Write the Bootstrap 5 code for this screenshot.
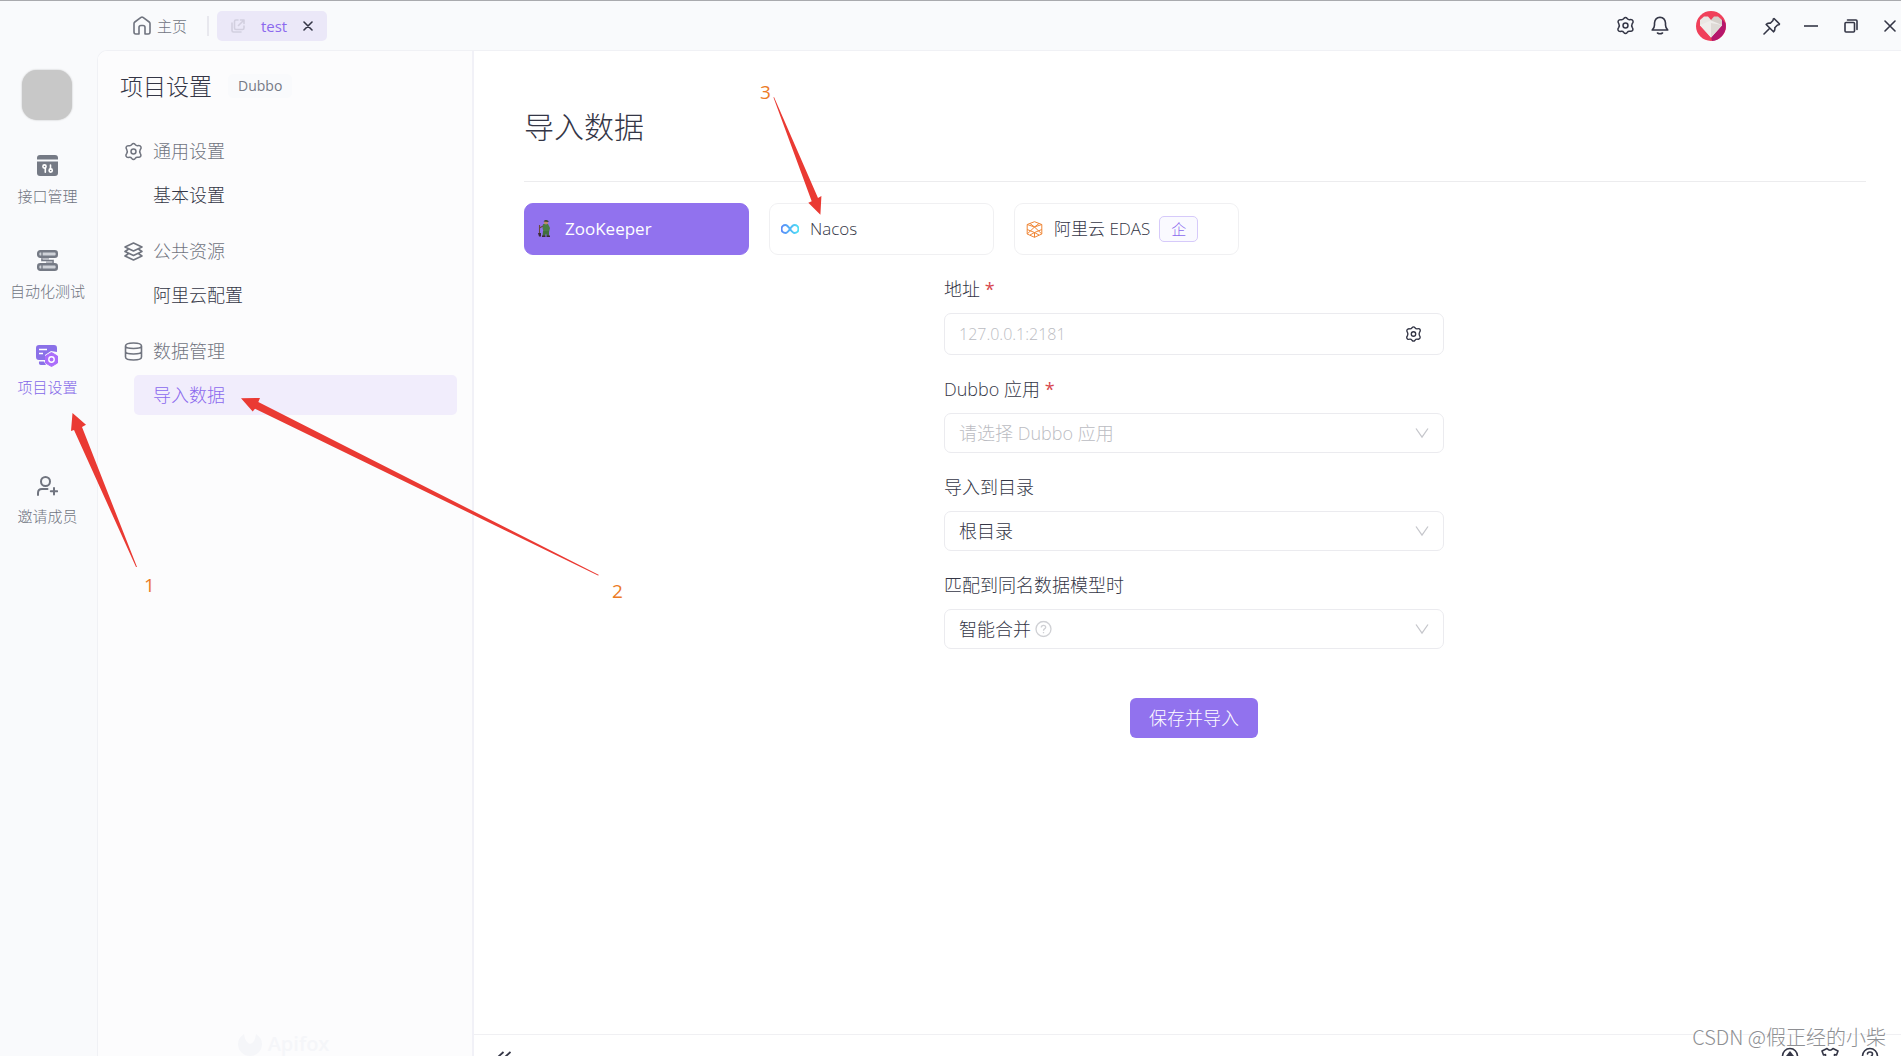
<!DOCTYPE html>
<html lang="zh-CN">
<head>
<meta charset="utf-8">
<meta name="viewport" content="width=device-width, initial-scale=1">
<title>导入数据 - 项目设置</title>
<link rel="stylesheet" href="https://cdn.jsdelivr.net/npm/bootstrap@5.3.0/dist/css/bootstrap.min.css">
<style>
:root{--ink:#343646;--muted-ink:#70747f;--brand:#8b69ee;--line:#ededf1;--soft:#f9fafc}
body{font-family:"Open Sans","Noto Sans CJK SC",sans-serif;font-weight:300;font-size:18px;line-height:26px;color:var(--ink);background:var(--soft);overflow:hidden}
svg{display:block;flex:none}
.ln{fill:none;stroke:currentColor;stroke-width:1.6;stroke-linecap:round;stroke-linejoin:round}
.topbar{height:50px;border-top:1px solid #a9aaae;padding-left:133px;font-size:15px;color:var(--muted-ink)}
.topbar a{color:inherit;gap:6px}
.home-sep{width:2px;height:20px;background:#e8e8ee;margin:0 8px 0 20px}
.tab-chip{height:30px;width:110px;padding:0 14px;background:#ebe8f8;border-radius:5px}
.tab-chip span{color:var(--brand);font-weight:400}
.icon-btn{background:none;border:0;padding:0;color:var(--ink)}
.avatar-btn{margin:1px 37px 0 27px}
.pin-btn{margin-right:23px}
.win-btn{margin-right:26px}
.close-btn{margin-right:5px}
.rail{width:97px;padding-top:20px;font-size:15px;line-height:22px;color:var(--muted-ink)}
.avatar-box{width:50px;height:50px;border-radius:15px;background:#c8c8c8;box-shadow:0 0 2px #bbb;margin:0 3px 35px 0}
.rail a{color:inherit;height:95px;padding-right:2px;gap:9px}
.rail a.current{color:#8468e8}
.rail a.invite{margin-top:36px}
.frame-box{border-top:1px solid #f0f1f5;border-left:1px solid #f0f1f5;border-top-left-radius:10px;overflow:hidden;background:#fff;min-width:0;min-height:0}
.side{width:376px;border-right:2px solid #f1f1f7;background:#fcfcfd;padding:15px 15px 0 22px}
.side h1{font-size:23px;line-height:40px;font-weight:300;margin-bottom:9px}
.type-tag{font-size:14px;font-weight:400;line-height:24px;padding:0 10px;background:var(--soft);border-radius:5px;color:#757985;margin-bottom:9px}
.grp-head{height:40px;margin-top:16px;padding-left:4px;gap:10px;color:var(--muted-ink);font-size:18px}
.side-link{height:40px;margin:4px 0 0 14px;padding-left:19px;border-radius:5px;font-size:18px;color:var(--ink)}
.side-link.current{background:#f1edfc;color:var(--brand)}
.brand-ghost{color:#f5f6f9;font-size:20px;font-weight:600;line-height:24px;gap:6px;padding-right:10px}
.main-col{min-width:0}
.body-area{padding:50px 35px 0 50px}
.body-area h2{font-size:30px;line-height:52px;font-weight:300;padding-bottom:28px;border-bottom:1px solid #ececee;margin-bottom:21px}
.src-row{gap:20px}
.src{width:225px;height:52px;border:1px solid #f0f0f2;border-radius:9px;background:#fff;color:var(--ink);padding:0 11px;gap:11px;text-align:left;font-size:17px;font-weight:300}
.src.current{background:#9172ee;border-color:#9172ee;color:#fff;font-weight:400}
.ent{font-size:15px;line-height:22px;border:1px solid #d6cafa;background:#fafaff;color:var(--brand);border-radius:5px;padding:1px 11px;margin-left:-2px}
.import-form{width:500px;max-width:100%;margin:21px auto 0}
.import-wrap{padding-right:2px}
.fld{margin-bottom:21px}
.fld label{display:block;margin-bottom:11px}
.fld b{color:#d8474e;font-weight:400}
.fld .form-control,.fld .form-select{height:40px;border:1px solid #ebebef;border-radius:7px;font-size:18px;font-weight:300;color:var(--ink);padding:0 14px;background:#fff}
.fld .form-control{height:42px;font-size:16px}
.fld .form-control::placeholder,.fld .form-select.blank{color:#bbbcc2}
.over-end{position:absolute;right:15px;top:50%;transform:translateY(-50%);color:#c6c7cc;pointer-events:none}
.over-help{position:absolute;left:91px;top:50%;transform:translateY(-50%);color:#cfd0d4}
.gear-end{right:22px;color:var(--ink);pointer-events:auto}
.save{background:#9172ee;color:#fff;border:0;border-radius:6px;height:40px;width:128px;padding:0;font-size:18px;font-weight:300;margin-top:28px}
.foot{height:22px;border-top:1px solid #f0f0f3;color:var(--ink);padding:12px 22px 0 23px;overflow:hidden}
.foot-icons{gap:22px}
.notes{position:absolute;left:0;top:0;pointer-events:none;z-index:5}
.notes text{font-size:19px;font-weight:400;fill:#ec7a25}
.watermark{position:absolute;right:15px;bottom:4px;z-index:6;font-size:20px;line-height:30px;font-family:"Noto Sans CJK SC",sans-serif;color:#8e8f93;text-shadow:1px 1px 0 #fff}
</style>
</head>
<body class="vh-100 d-flex flex-column position-relative">
<svg width="0" height="0" class="position-absolute" aria-hidden="true">
<symbol id="gear" viewBox="0 0 20 20"><path class="ln" d="M8.2 2.7 Q10 .5 11.8 2.7 Q12.7 4 14.3 3.9 Q17.8 3.200 18 6 Q18 7 17.100 8 Q16 10 17.100 12 Q18.800 14.600 16.500 15.900 Q15.300 16.300 14.300 16.100 Q12.700 16 11.800 17.300 Q10 19.500 8.200 17.300 Q7.300 16 5.700 16.100 Q2.200 16.800 2 14 Q2 13 2.900 12 Q4 10 2.900 8 Q1.200 5.400 3.500 4.100 Q4.700 3.700 5.700 3.900 Q7.300 4 8.200 2.700Z"/><circle class="ln" cx="10" cy="10" r="2.6"/></symbol>
<symbol id="chev" viewBox="0 0 14 12"><path d="M1 1.500 7 10 13 1.500" fill="none" stroke="currentColor" stroke-width="1.300"/></symbol>
</svg>

<header class="topbar d-flex align-items-center flex-shrink-0">
  <a href="#" class="d-flex align-items-center text-decoration-none">
    <svg width="18" height="19" viewBox="0 0 18 19"><path class="ln" d="M1 7.500 Q1 6.600 1.800 6L8 1.400Q9 .8 10 1.400L16.200 6Q17 6.600 17 7.500V16Q17 18 15.200 18H12V11.500Q12 9.500 10 9.500H8Q6 9.500 6 11.500V18H2.800Q1 18 1 16Z"/></svg>
    <span>主页</span>
  </a>
  <div class="home-sep"></div>
  <div class="tab-chip d-flex align-items-center justify-content-between">
    <svg width="14" height="14" viewBox="0 0 14 14" color="#d2cfdf"><path class="ln" d="M7 1H5Q3.500 1 3.500 2.500V9Q3.500 10.500 5 10.500H11.500Q13 10.500 13 9V7M9.500 1H13V4.500M13 1 7.500 6.500M1 4V11.500Q1 13 2.500 13H10"/></svg>
    <span>test</span>
    <button class="icon-btn" aria-label="关闭标签"><svg width="10" height="10" viewBox="0 0 10 10"><path class="ln" d="M1 1 9 9M9 1 1 9"/></svg></button>
  </div>
  <div class="ms-auto d-flex align-items-center">
    <button class="icon-btn" aria-label="设置"><svg width="19" height="19"><use href="#gear"/></svg></button>
    <button class="icon-btn ms-3" aria-label="通知"><svg width="18" height="19" viewBox="0 0 18 19"><path class="ln" d="M1.200 14H16.800Q14.500 12 14.500 9V7Q14 1.500 9 1.200Q4 1.500 3.500 7V9Q3.500 12 1.200 14ZM6.500 17Q9 18.500 11.500 17"/></svg></button>
    <button class="icon-btn avatar-btn" aria-label="账户"><svg width="30" height="30" viewBox="0 0 30 30"><circle cx="15" cy="15" r="15" fill="#f0405a"/><path d="M26 8 29.500 12A15 15 0 0 1 16 30L15 26Z" fill="#b5176c"/><path d="M15 26.500 4 14.500V9L8 5.500H12L15 9Z" fill="#e9e6e3"/><path d="M15 26.500 26 14.500V9L22 5.500H18L15 9Z" fill="#d5d0cb"/><path d="M4 14 15 9.500 26 14 15 26.500Z" fill="#efedeb"/><path d="M15 12V26.500L26 14Z" fill="#dedad6"/></svg></button>
    <button class="icon-btn pin-btn" aria-label="置顶"><svg width="18" height="18" viewBox="0 0 18 18"><path class="ln" d="M11 1.500 16.500 7Q16.500 8 14.500 8L11.800 10.700Q12.300 13.500 10.500 14.800L3.200 7.500Q4.500 5.700 7.300 6.200L10 3.500Q10 1.500 11 1.500ZM6.500 11.500 1 17"/></svg></button>
    <button class="icon-btn win-btn" aria-label="最小化"><svg width="14" height="14" viewBox="0 0 14 14"><path d="M0 7H14" stroke="currentColor" stroke-width="1.600"/></svg></button>
    <button class="icon-btn win-btn" aria-label="还原"><svg width="14" height="14" viewBox="0 0 14 14"><path class="ln" d="M1 4.500Q1 3.500 2 3.500H9.500Q10.500 3.500 10.500 4.500V12Q10.500 13 9.500 13H2Q1 13 1 12ZM3.500 1H12Q13 1 13 2V10.500"/></svg></button>
    <button class="icon-btn close-btn" aria-label="关闭"><svg width="12" height="12" viewBox="0 0 12 12"><path class="ln" d="M1 1 11 11M11 1 1 11"/></svg></button>
  </div>
</header>

<div class="d-flex flex-grow-1 overflow-hidden">
  <nav class="rail d-flex flex-column align-items-center flex-shrink-0" aria-label="主导航">
    <div class="avatar-box flex-shrink-0"></div>
    <a href="#" class="d-flex flex-column align-items-center text-decoration-none flex-shrink-0">
      <svg width="21" height="21" viewBox="0 0 21 21"><path d="M0 4.500V3Q0 0 3 0H18Q21 0 21 3V4.500Z" fill="#757a85"/><path d="M0 6.500H21V18Q21 21 18 21H3Q0 21 0 18Z" fill="#757a85"/><g fill="none" stroke="#fff" stroke-width="1.600" stroke-linecap="round"><circle cx="7.500" cy="11.500" r="1.600"/><path d="M8.300 13V17.300M13.500 10V14"/><circle cx="13.700" cy="15.500" r="1.600"/></g></svg>
      <span>接口管理</span></a>
    <a href="#" class="d-flex flex-column align-items-center text-decoration-none flex-shrink-0">
      <svg width="21" height="21" viewBox="0 0 21 21"><path d="M4 7H12V9.500H17V14H9V11.500H4Z" fill="#b4b7bf"/><path d="M5 8.500V10.500H16V13" fill="none" stroke="#757a85" stroke-width="1.200"/><g fill="#cfd2d8" stroke="#757a85" stroke-width="2.400"><rect x="1.200" y="1.200" width="18.600" height="5.600" rx="2"/><rect x="1.200" y="14.200" width="18.600" height="5.600" rx="2"/><path d="M5 1.200V6.800M5 14.200V19.800" stroke-width="1.300"/></g></svg>
      <span>自动化测试</span></a>
    <a href="#" class="current d-flex flex-column align-items-center text-decoration-none flex-shrink-0" aria-current="page">
      <svg width="22" height="22" viewBox="0 0 22 22"><path d="M0 3Q0 0 3 0H18Q21 0 21 3V7L15 6 9 10V15H3Q0 15 0 12ZM3 16.500H8L10 20H5Q2.500 20 3 16.500Z" fill="#8a70e8"/><path d="M3 4.500H11M3 8.500H7" stroke="#fff" stroke-width="1.500"/><path d="M15.500 7.500 21.500 11V18L15.500 21.500 9.500 18V11Z" fill="#ab6dfb" stroke="#ab6dfb" stroke-linejoin="round"/><circle cx="15.500" cy="14.500" r="2.700" fill="none" stroke="#fff" stroke-width="1.400"/></svg>
      <span>项目设置</span></a>
    <a href="#" class="invite d-flex flex-column align-items-center text-decoration-none flex-shrink-0">
      <svg width="21" height="20" viewBox="0 0 21 20"><g class="ln" style="stroke-width:2"><circle cx="8.500" cy="5.500" r="4.500"/><path d="M1 19V17Q1 13 5 13H10.500M17 12V18.500M13.800 15.200H20.200"/></g></svg>
      <span>邀请成员</span></a>
  </nav>

  <div class="frame-box d-flex flex-grow-1">
    <aside class="side d-flex flex-column flex-shrink-0">
      <div class="d-flex align-items-center gap-3"><h1>项目设置</h1><span class="type-tag">Dubbo</span></div>
      <div class="grp-head d-flex align-items-center"><svg width="19" height="19"><use href="#gear"/></svg>通用设置</div>
      <a href="#" class="side-link d-flex align-items-center text-decoration-none">基本设置</a>
      <div class="grp-head d-flex align-items-center"><svg width="19" height="19" viewBox="0 0 19 19"><path class="ln" d="M9.500 1 18 5 9.500 9 1 5ZM4 7.500 1 9.500 9.500 13.500 18 9.500 15 7.500M4 12 1 14 9.500 18 18 14 15 12"/></svg>公共资源</div>
      <a href="#" class="side-link d-flex align-items-center text-decoration-none">阿里云配置</a>
      <div class="grp-head d-flex align-items-center"><svg width="19" height="19" viewBox="0 0 19 19"><path class="ln" d="M1.500 4Q1.500 1 9.500 1T17.500 4V15Q17.500 18 9.500 18T1.500 15ZM1.500 4Q1.500 6.500 9.500 6.500T17.500 4M1.500 9.500Q1.500 12 9.500 12T17.500 9.500"/></svg>数据管理</div>
      <a href="#" class="side-link current d-flex align-items-center text-decoration-none" aria-current="page">导入数据</a>
      <div class="brand-ghost d-flex justify-content-center mt-auto"><svg width="24" height="24" viewBox="0 0 24 24"><path d="M6 2Q7 10 12 12 17 11 18 2 24 6 24 12A12 12 0 0 1 0 12Q0 6 6 2Z" fill="currentColor"/></svg>Apifox</div>
    </aside>

    <main class="main-col d-flex flex-column flex-grow-1">
      <div class="body-area flex-grow-1">
        <h2>导入数据</h2>
        <div class="d-flex flex-wrap src-row">
          <button class="src current d-flex align-items-center"><svg width="18" height="20" viewBox="0 0 18 20"><path d="M7 5H12L14 9 13 13H7.500L6.500 9Z" fill="#4a7d45"/><path d="M7 12H13V17H10.800L10 14.500 9 17H6.500Z" fill="#416f3c"/><circle cx="10" cy="3.500" r="2" fill="#c08a66"/><path d="M7.500 2.500Q9.500 0 12.500 2V3Z" fill="#34452f"/><path d="M7 7 3.500 9M3.500 6V16" fill="none" stroke="#6a4a3d" stroke-width="1.100"/><path d="M2 14H5V17.500H3ZM6 16.500H9.500V18H6ZM10.500 16.500H14V18H10.500Z" fill="#3b2b3a"/></svg>ZooKeeper</button>
          <button class="src d-flex align-items-center"><svg width="18" height="12" viewBox="0 0 18 12"><defs><linearGradient id="ng"><stop stop-color="#5b8af8"/><stop offset="1" stop-color="#4de0f5"/></linearGradient></defs><path d="M9 6C6.500 2.500 5.500 2 4.500 2A3.700 3.700 0 0 0 4.500 10C6 10 7 9 9 6S12 2 13.500 2A3.700 3.700 0 0 1 13.500 10C12.500 10 11.500 9.500 9 6Z" fill="none" stroke="url(#ng)" stroke-width="2"/></svg>Nacos</button>
          <button class="src d-flex align-items-center"><svg width="17" height="17" viewBox="0 0 17 17"><g fill="none" stroke="#ef8636" stroke-width="1" stroke-linejoin="round"><path d="M8.500 .7 15.800 3.500V13L8.500 16.300 1.200 13V3.500ZM1.200 3.500 8.500 6 15.800 3.500M8.500 6 1.200 13M8.500 6 15.800 13M1.200 8.500 8.500 11.500 15.800 8.500M8.500 11.500V16.300M4 2.500 8.500 6 13 2.500M4 14 8.500 11.500 13 14"/></g></svg>阿里云 EDAS<span class="ent">企</span></button>
        </div>
        <div class="import-wrap">
        <form class="import-form" onsubmit="return false">
          <div class="fld"><label for="addr">地址 <b>*</b></label>
            <div class="position-relative"><input id="addr" class="form-control" placeholder="127.0.0.1:2181"><button type="button" class="icon-btn over-end gear-end" aria-label="地址设置"><svg width="17" height="17"><use href="#gear"/></svg></button></div></div>
          <div class="fld"><label for="app">Dubbo 应用 <b>*</b></label>
            <div class="position-relative"><select id="app" class="form-select blank"><option>请选择 Dubbo 应用</option></select><svg class="over-end" width="14" height="12"><use href="#chev"/></svg></div></div>
          <div class="fld"><label for="dir">导入到目录</label>
            <div class="position-relative"><select id="dir" class="form-select"><option>根目录</option></select><svg class="over-end" width="14" height="12"><use href="#chev"/></svg></div></div>
          <div class="fld"><label for="mode">匹配到同名数据模型时</label>
            <div class="position-relative"><select id="mode" class="form-select"><option>智能合并</option></select><svg class="over-help" width="17" height="17" viewBox="0 0 17 17"><circle cx="8.500" cy="8.500" r="7.500" fill="none" stroke="currentColor" stroke-width="1.300"/><path d="M6.300 7Q6.300 4.800 8.500 4.800T10.700 6.800Q10.700 7.800 9.500 8.400 8.500 9 8.500 10.200M8.500 11.500V12.700" fill="none" stroke="currentColor" stroke-width="1.300"/></svg><svg class="over-end" width="14" height="12"><use href="#chev"/></svg></div></div>
          <div class="text-center"><button class="save">保存并导入</button></div>
        </form>
        </div>
      </div>
      <footer class="foot d-flex align-items-start flex-shrink-0">
        <svg width="14" height="16" viewBox="0 0 14 16"><path d="M6.500 5 1 10 6.500 15M13.500 5 8 10 13.500 15" fill="none" stroke="currentColor" stroke-width="1.800"/></svg>
        <div class="ms-auto d-flex foot-icons">
          <svg width="18" height="18" viewBox="0 0 18 18"><circle class="ln" cx="9" cy="9" r="7.500"/><path d="M9 4 13 9H5Z" fill="currentColor"/></svg>
          <svg width="18" height="18" viewBox="0 0 18 18"><path class="ln" d="M6 1.500Q9 5 12 1.500L17 4 15.500 8 13.500 7.500V16H4.500V7.500L2.500 8 1 4Z"/></svg>
          <svg width="18" height="18" viewBox="0 0 18 18"><circle class="ln" cx="9" cy="9" r="7.500"/><path class="ln" d="M6.500 7Q6.500 5 9 5T11.500 7 9 10"/></svg>
        </div>
      </footer>
    </main>
  </div>
</div>

<svg class="notes" width="900" height="620" viewBox="0 0 900 620">
  <g fill="#ea3a33"><path d="M72.500 413 86 424.700 82 427 137 567 136 567 74 430 71 431Z"/><path d="M241 398.300 260 398 258.300 402 599 575 598 575.500 255 408.700 252.700 411.500Z"/><path d="M820.400 214.700 821.400 196 818 198 774 97 773.500 97.500 811.700 201.300 808.300 202.700Z"/></g>
  <text x="144" y="592">1</text><text x="612" y="598">2</text><text x="760" y="99">3</text>
</svg>
<div class="watermark">CSDN @假正经的小柴</div>
<script src="https://cdn.jsdelivr.net/npm/bootstrap@5.3.0/dist/js/bootstrap.bundle.min.js"></script>
</body>
</html>
